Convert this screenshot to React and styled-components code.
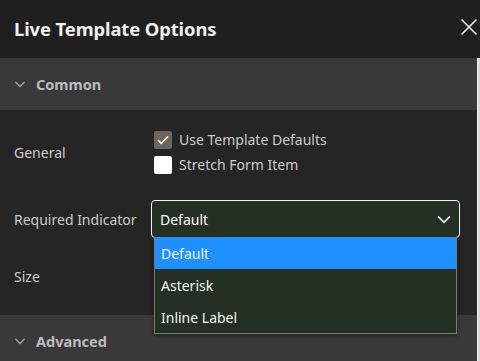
import React from "react";
import styled, { createGlobalStyle } from "styled-components";

const GlobalStyle = createGlobalStyle`
  html, body {
    margin: 0;
    padding: 0;
    background: #252525;
  }
  body {
    font-family: "Segoe UI", "Noto Sans", "Open Sans", sans-serif;
  }
`;

const Chevron = ({ size = 12, color = "#a8a8a8" }) => (
  <svg width={size} height={size} viewBox="0 0 12 12" fill="none">
    <path d="M1.5 4 L6 8.5 L10.5 4" stroke={color} strokeWidth="1.3" />
  </svg>
);

const options = ["Default", "Asterisk", "Inline Label"];

export default function App() {
  return (
    <Panel>
      <GlobalStyle />
      <Header>
        <Title>Live Template Options</Title>
        <CloseButton aria-label="Close">
          <svg width="18" height="18" viewBox="0 0 18 18">
            <path d="M1.5 1.5 L16.5 16.5 M16.5 1.5 L1.5 16.5" stroke="#f2f2f2" strokeWidth="1.6" />
          </svg>
        </CloseButton>
      </Header>

      <Body>
        <Main>
          <SectionHeader>
            <Chevron />
            <SectionTitle>Common</SectionTitle>
          </SectionHeader>

          <Content>
            <Row top={17} height={50}>
              <Label>General</Label>
              <CheckGroup>
                <CheckItem>
                  <Box checked>
                    <svg width="12" height="10" viewBox="0 0 12 10">
                      <path d="M1 5 L4.3 8.3 L11 1.5" stroke="#fff" strokeWidth="1.6" fill="none" />
                    </svg>
                  </Box>
                  <CheckLabel>Use Template Defaults</CheckLabel>
                </CheckItem>
                <CheckItem>
                  <Box />
                  <CheckLabel>Stretch Form Item</CheckLabel>
                </CheckItem>
              </CheckGroup>
            </Row>

            <Row top={23} height={38}>
              <Label>Required Indicator</Label>
              <SelectWrap>
                <Select>
                  <span>Default</span>
                  <Chevron size={16} color="#e8e8e8" />
                </Select>
                <Listbox>
                  {options.map((o, i) => (
                    <Option key={o} active={i === 0}>{o}</Option>
                  ))}
                </Listbox>
              </SelectWrap>
            </Row>

            <Row top={19} height={38}>
              <Label>Size</Label>
            </Row>
          </Content>

          <SectionHeader>
            <Chevron />
            <SectionTitle>Advanced</SectionTitle>
          </SectionHeader>
        </Main>
        <Scrollbar />
      </Body>
    </Panel>
  );
}

const Panel = styled.div`
  width: 480px;
  height: 361px;
  overflow: hidden;
  background: #252525;
  display: flex;
  flex-direction: column;
`;

const Header = styled.div`
  height: 58px;
  flex: none;
  background: #1f1f1f;
  display: flex;
  align-items: center;
  justify-content: space-between;
  padding: 0 1px 0 14px;
`;

const Title = styled.h1`
  margin: 0 0 2px;
  font-size: 18.4px;
  font-weight: 700;
  color: #f0f0f0;
  letter-spacing: -0.1px;
`;

const CloseButton = styled.button`
  border: 0;
  background: none;
  padding: 0;
  width: 20px;
  height: 20px;
  display: flex;
  align-items: center;
  justify-content: center;
  margin-bottom: 4px;
`;

const Body = styled.div`
  flex: 1;
  display: flex;
  min-height: 0;
`;

const Main = styled.div`
  flex: 1;
  display: flex;
  flex-direction: column;
`;

const Scrollbar = styled.div`
  width: 3px;
  flex: none;
  background: #d9d9d9;
  border-left: 1px solid #f4f4f4;
  box-sizing: border-box;
`;

const SectionHeader = styled.div`
  height: 52px;
  flex: none;
  background: #393939;
  display: flex;
  align-items: center;
  gap: 10px;
  padding-left: 14px;
  box-sizing: border-box;
`;

const SectionTitle = styled.span`
  font-size: 14.5px;
  font-weight: 700;
  color: #bcbcbc;
`;

const Content = styled.div`
  padding: 0 17px 20px 14px;
  display: flex;
  flex-direction: column;
`;

const Row = styled.div`
  display: grid;
  grid-template-columns: 137px 1fr;
  align-items: center;
  margin-top: ${(p) => p.top}px;
  min-height: ${(p) => p.height}px;
`;

const Label = styled.div`
  font-size: 14px;
  color: #cccccc;
`;

const CheckGroup = styled.div`
  display: flex;
  flex-direction: column;
  padding-left: 3px;
`;

const CheckItem = styled.label`
  height: 25px;
  display: flex;
  align-items: center;
  gap: 7px;
`;

const Box = styled.span`
  width: 18px;
  height: 18px;
  border-radius: 2px;
  background: ${(p) => (p.checked ? "#6c645f" : "#ffffff")};
  display: flex;
  align-items: center;
  justify-content: center;
`;

const CheckLabel = styled.span`
  font-size: 14px;
  color: #cccccc;
`;

const SelectWrap = styled.div`
  position: relative;
`;

const Select = styled.div`
  height: 38px;
  box-sizing: border-box;
  border: 1px solid #f2f2f2;
  border-radius: 4px;
  background: #253025;
  display: flex;
  align-items: center;
  justify-content: space-between;
  padding: 0 7px 0 8px;
  font-size: 14px;
  color: #ffffff;
`;

const Listbox = styled.ul`
  position: absolute;
  top: 37px;
  left: 3px;
  right: 3px;
  margin: 0;
  padding: 0;
  list-style: none;
  background: #243024;
  border: 1px solid #7a7a7a;
  border-top: 0;
  box-shadow: 0 2px 4px rgba(0, 0, 0, 0.4);
  z-index: 2;
`;

const Option = styled.li`
  height: 32px;
  display: flex;
  align-items: center;
  padding-left: 6px;
  font-size: 14px;
  color: #f4f4f4;
  background: ${(p) => (p.active ? "#1e90ff" : "transparent")};
`;
